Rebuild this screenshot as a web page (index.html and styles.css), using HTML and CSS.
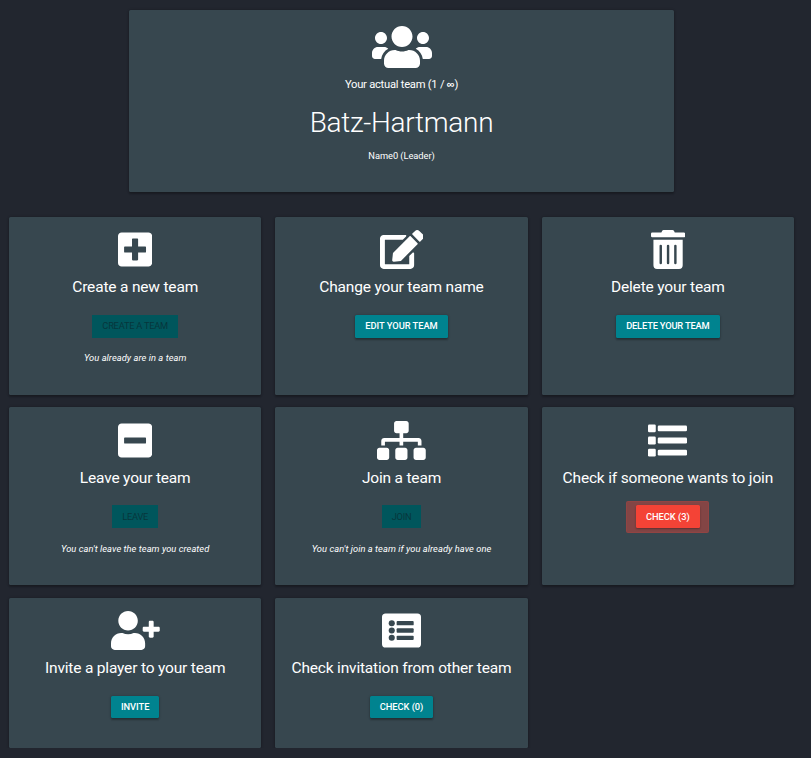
FILE: index.html
```html
<!DOCTYPE html>
<html lang="en">
<head>
<meta charset="utf-8">
<title>Team</title>
<link rel="stylesheet" href="styles.css">
</head>
<body>
<main class="page">
  <section class="card team">
    <svg class="icon" viewBox="0 0 640 512"><path d="M96 224c35.3 0 64-28.7 64-64s-28.7-64-64-64-64 28.7-64 64 28.7 64 64 64zm448 0c35.3 0 64-28.7 64-64s-28.7-64-64-64-64 28.7-64 64 28.7 64 64 64zm32 32h-64c-17.6 0-33.500 7.100-45.100 18.600 40.300 22.100 68.900 62 75.100 109.400h66c17.700 0 32-14.300 32-32v-32c0-35.300-28.700-64-64-64zm-256 0c61.900 0 112-50.100 112-112S381.900 32 320 32 208 82.100 208 144s50.100 112 112 112zm76.800 32h-8.300c-20.800 10-43.900 16-68.500 16s-47.600-6-68.500-16h-8.300C179.600 288 128 339.600 128 403.200V432c0 26.500 21.500 48 48 48h288c26.500 0 48-21.500 48-48v-28.800c0-63.600-51.600-115.200-115.200-115.200zm-223.700-13.400C161.500 263.100 145.600 256 128 256H64c-35.300 0-64 28.700-64 64v32c0 17.700 14.300 32 32 32h65.900c6.300-47.400 34.900-87.300 75.200-109.400z"/></svg>
    <p class="team-label">Your actual team (1 / <span class="infinity">∞</span>)</p>
    <h1 class="team-name">Batz-Hartmann</h1>
    <p class="member">Name0 (Leader)</p>
  </section>

  <div class="grid">
    <section class="card">
      <svg class="icon" viewBox="0 0 448 512"><path d="M400 32H48C21.500 32 0 53.500 0 80v352c0 26.500 21.500 48 48 48h352c26.500 0 48-21.500 48-48V80c0-26.500-21.500-48-48-48zm-32 252c0 6.600-5.400 12-12 12h-92v92c0 6.600-5.400 12-12 12h-56c-6.600 0-12-5.400-12-12v-92H92c-6.600 0-12-5.400-12-12v-56c0-6.600 5.400-12 12-12h92v-92c0-6.600 5.400-12 12-12h56c6.600 0 12 5.400 12 12v92h92c6.600 0 12 5.400 12 12v56z"/></svg>
      <h2>Create a new team</h2>
      <button class="btn" disabled>Create a team</button>
      <p class="note">You already are in a team</p>
    </section>
    <section class="card">
      <svg class="icon" viewBox="0 0 576 512"><path d="M402.600 83.200l90.200 90.200c3.800 3.800 3.800 10 0 13.800L274.400 405.600l-92.800 10.300c-12.400 1.400-22.900-9.100-21.500-21.500l10.300-92.800L388.800 83.200c3.800-3.800 10-3.800 13.800 0zm162-22.900l-48.800-48.800c-15.200-15.200-39.900-15.200-55.200 0l-35.400 35.400c-3.800 3.800-3.800 10 0 13.800l90.200 90.200c3.800 3.800 10 3.800 13.800 0l35.400-35.400c15.200-15.300 15.200-40 0-55.200zM384 346.200V448H64V128h229.800c3.200 0 6.200-1.300 8.500-3.500l40-40c7.600-7.600 2.200-20.500-8.500-20.500H48C21.500 64 0 85.500 0 112v352c0 26.500 21.500 48 48 48h352c26.500 0 48-21.500 48-48V306.200c0-10.700-12.900-16-20.500-8.500l-40 40c-2.200 2.300-3.500 5.300-3.500 8.500z"/></svg>
      <h2>Change your team name</h2>
      <button class="btn">Edit your team</button>
    </section>
    <section class="card">
      <svg class="icon" viewBox="0 0 448 512"><path d="M32 464a48 48 0 0 0 48 48h288a48 48 0 0 0 48-48V128H32zm272-256a16 16 0 0 1 32 0v224a16 16 0 0 1-32 0zm-96 0a16 16 0 0 1 32 0v224a16 16 0 0 1-32 0zm-96 0a16 16 0 0 1 32 0v224a16 16 0 0 1-32 0zM432 32H312l-9.400-18.700A24 24 0 0 0 281.100 0H166.800a23.720 23.720 0 0 0-21.400 13.300L136 32H16A16 16 0 0 0 0 48v32a16 16 0 0 0 16 16h416a16 16 0 0 0 16-16V48a16 16 0 0 0-16-16z"/></svg>
      <h2>Delete your team</h2>
      <button class="btn tight">Delete your team</button>
    </section>
    <section class="card">
      <svg class="icon" viewBox="0 0 448 512"><path d="M400 32H48C21.500 32 0 53.500 0 80v352c0 26.500 21.500 48 48 48h352c26.500 0 48-21.500 48-48V80c0-26.500-21.500-48-48-48zM92 296c-6.600 0-12-5.400-12-12v-56c0-6.600 5.400-12 12-12h264c6.600 0 12 5.400 12 12v56c0 6.600-5.400 12-12 12H92z"/></svg>
      <h2>Leave your team</h2>
      <button class="btn" disabled>Leave</button>
      <p class="note">You can't leave the team you created</p>
    </section>
    <section class="card">
      <svg class="icon" viewBox="0 0 640 512"><path d="M128 352H32c-17.670 0-32 14.330-32 32v96c0 17.670 14.330 32 32 32h96c17.670 0 32-14.330 32-32v-96c0-17.670-14.330-32-32-32zm-24-80h192v48h48v-48h192v48h48v-57.590c0-21.170-17.230-38.410-38.410-38.410H344v-64h40c17.670 0 32-14.330 32-32V32c0-17.670-14.330-32-32-32H256c-17.670 0-32 14.330-32 32v96c0 17.670 14.330 32 32 32h40v64H94.410C73.230 224 56 241.230 56 262.410V320h48v-48zm264 80h-96c-17.670 0-32 14.330-32 32v96c0 17.670 14.330 32 32 32h96c17.670 0 32-14.330 32-32v-96c0-17.670-14.330-32-32-32zm240 0h-96c-17.670 0-32 14.330-32 32v96c0 17.670 14.330 32 32 32h96c17.670 0 32-14.330 32-32v-96c0-17.670-14.330-32-32-32z"/></svg>
      <h2>Join a team</h2>
      <button class="btn" disabled>Join</button>
      <p class="note">You can't join a team if you already have one</p>
    </section>
    <section class="card">
      <svg class="icon" viewBox="0 0 512 512"><rect y="45" width="102" height="102" rx="16"/><rect y="205" width="102" height="102" rx="16"/><rect y="365" width="102" height="102" rx="16"/><rect x="128" y="58" width="384" height="76" rx="16"/><rect x="128" y="218" width="384" height="76" rx="16"/><rect x="128" y="378" width="384" height="76" rx="16"/></svg>
      <h2>Check if someone wants to join</h2>
      <button class="btn alert">Check (3)</button>
    </section>
    <section class="card">
      <svg class="icon" viewBox="0 0 640 512"><path d="M624 208h-64v-64c0-8.800-7.200-16-16-16h-32c-8.800 0-16 7.200-16 16v64h-64c-8.800 0-16 7.200-16 16v32c0 8.800 7.200 16 16 16h64v64c0 8.800 7.200 16 16 16h32c8.800 0 16-7.200 16-16v-64h64c8.800 0 16-7.200 16-16v-32c0-8.800-7.200-16-16-16zm-400 48c70.700 0 128-57.300 128-128S294.700 0 224 0 96 57.300 96 128s57.300 128 128 128zm89.600 32h-16.700c-22.200 10.200-46.900 16-72.900 16s-50.600-5.800-72.900-16h-16.700C60.200 288 0 348.200 0 422.400V464c0 26.500 21.500 48 48 48h352c26.500 0 48-21.500 48-48v-41.600c0-74.200-60.200-134.400-134.400-134.400z"/></svg>
      <h2>Invite a player to your team</h2>
      <button class="btn">Invite</button>
    </section>
    <section class="card">
      <svg class="icon" viewBox="0 0 512 512"><rect y="32" width="512" height="448" rx="48"/><g class="cutout"><circle cx="128" cy="160" r="40"/><circle cx="128" cy="256" r="40"/><circle cx="128" cy="352" r="40"/><rect x="192" y="132" width="224" height="56" rx="12"/><rect x="192" y="228" width="224" height="56" rx="12"/><rect x="192" y="324" width="224" height="56" rx="12"/></g></svg>
      <h2>Check invitation from other team</h2>
      <button class="btn">Check (0)</button>
    </section>
  </div>
</main>
</body>
</html>
```
FILE: styles.css
```css
* { box-sizing: border-box; }

body {
  margin: 0;
  background: #22262f;
  color: #fff;
  font-family: Roboto, "Liberation Sans", sans-serif;
}

.page {
  width: 803px;
  padding: 10px 9px 0;
}

h1, h2, p { margin: 0; }

.card {
  display: flex;
  flex-direction: column;
  align-items: center;
  padding-top: 13.3px;
  background: #37474f;
  border-radius: 1.5px;
  box-shadow: 0 1.5px 2px rgba(0, 0, 0, .24), 0 0 3px rgba(0, 0, 0, .2);
  white-space: nowrap;
}

.icon {
  display: block;
  flex: none;
  height: 39px;
  fill: #fff;
}

.cutout { fill: #37474f; }

.team {
  width: 545px;
  height: 182px;
  margin: 0 auto 25px;
}

.team .icon { height: 48px; }

.team-label {
  margin-top: 5.7px;
  font-size: 11.2px;
  letter-spacing: -.25px;
  line-height: 16px;
}

.infinity {
  font: 700 11px/1 "Liberation Sans", sans-serif;
}

.team-name {
  margin-top: 14px;
  font-size: 28px;
  font-weight: 300;
  letter-spacing: -.3px;
  line-height: 32px;
}

.member {
  margin-top: 10px;
  font-size: 9.3px;
  letter-spacing: -.05px;
  line-height: 14px;
}

.grid {
  display: grid;
  grid-template-columns: repeat(3, 1fr);
  grid-template-rows: 178px 178px 150px;
  gap: 12.3px 14px;
}

.card h2 {
  margin-top: 8px;
  font-size: 15.5px;
  font-weight: 400;
  letter-spacing: -.18px;
  line-height: 20px;
}

.btn {
  height: 22.7px;
  margin-top: 17.8px;
  padding: 0 10px;
  border: 0;
  border-radius: 1.5px;
  background: #00838f;
  color: #fff;
  font: 500 9.3px/22px Roboto, "Liberation Sans", sans-serif;
  letter-spacing: -.03px;
  text-transform: uppercase;
  box-shadow: 0 1.5px 2px rgba(0, 0, 0, .28), 0 0 3px rgba(0, 0, 0, .18);
}

.btn.tight { letter-spacing: -.17px; }

.btn:disabled {
  border-radius: 0;
  background: #00565c;
  color: #07363d;
  font-weight: 400;
  letter-spacing: -.25px;
  box-shadow: none;
}

.alert {
  background: #f44336;
  outline: 0;
  box-shadow: 0 1px 2px rgba(0, 0, 0, .3);
  position: relative;
}

.alert::before {
  content: "";
  position: absolute;
  inset: -4px -9px -5px -10px;
  border-radius: 2px;
  border: 1px solid rgba(244, 67, 54, .12);
  background: rgba(244, 67, 54, .4);
  z-index: -1;
}

.card:has(.alert) { isolation: isolate; }

.note {
  margin-top: 13.7px;
  font-size: 9.3px;
  font-style: italic;
  letter-spacing: .06px;
  line-height: 14px;
}
```
